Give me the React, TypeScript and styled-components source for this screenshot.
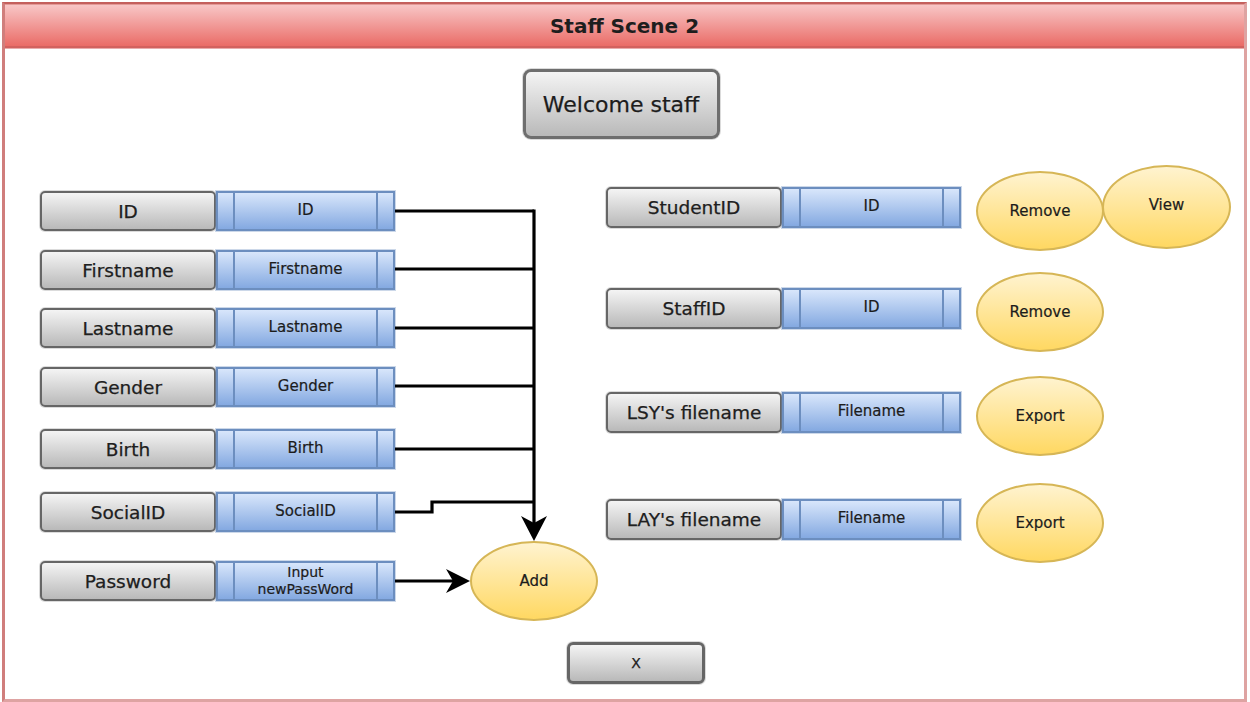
import React from 'react'
import styled, { createGlobalStyle } from 'styled-components'

const FONT = '"DejaVu Sans", Verdana, sans-serif'

const GlobalStyle = createGlobalStyle`
  html, body {
    margin: 0;
    padding: 0;
    background: #ffffff;
  }
  body {
    width: 1250px;
    height: 702px;
    overflow: hidden;
    font-family: ${FONT};
    color: #1c1c1c;
  }
`

interface RowSpec {
  label: string
  value: string
  gap: number
}

const leftRows: Array<RowSpec> = [
  { label: 'ID', value: 'ID', gap: 20 },
  { label: 'Firstname', value: 'Firstname', gap: 19 },
  { label: 'Lastname', value: 'Lastname', gap: 18 },
  { label: 'Gender', value: 'Gender', gap: 19 },
  { label: 'Birth', value: 'Birth', gap: 22 },
  { label: 'SocialID', value: 'SocialID', gap: 23 }
]

interface ActionRowSpec {
  label: string
  value: string
  gap: number
  actions: Array<string>
}

const rightRows: Array<ActionRowSpec> = [
  { label: 'StudentID', value: 'ID', gap: 0, actions: ['Remove', 'View'] },
  { label: 'StaffID', value: 'ID', gap: 21, actions: ['Remove'] },
  { label: "LSY's filename", value: 'Filename', gap: 24, actions: ['Export'] },
  { label: "LAY's filename", value: 'Filename', gap: 27, actions: ['Export'] }
]

const Field = ({ label, value, height, lift }: { label: string, value: React.ReactNode, height: number, lift?: boolean }): JSX.Element => (
  <FieldBox height={height} lift={lift}>
    <Label>{label}</Label>
    <Input>
      <Cap />
      <InputText>{value}</InputText>
      <Cap />
    </Input>
  </FieldBox>
)

// connectors between the left inputs and the Add bubble (coords local to LeftCol)
const Connectors = (): JSX.Element => (
  <Wires width="560" height="460" viewBox="0 0 560 460">
    <g stroke="#000" strokeWidth="3.2" fill="none">
      <path d="M355 40 H494" />
      <path d="M355 98 H494" />
      <path d="M355 157 H494" />
      <path d="M355 215 H494" />
      <path d="M355 278 H494" />
      <path d="M355 341 H392 V331 H494" />
      <path d="M494 38.4 V356" />
      <path d="M355 410 H418" />
    </g>
    <path d="M494 370 L481 345 L494 352 L507 345 Z" fill="#000" />
    <path d="M430 410 L406 398 L413 410 L406 422 Z" fill="#000" />
  </Wires>
)

const App = (): JSX.Element => {
  return (
    <>
      <GlobalStyle />
      <Window>
        <TitleBar>Staff Scene 2</TitleBar>
        <Body>
          <Welcome>Welcome staff</Welcome>
          <Main>
            <LeftCol>
              <Connectors />
              {leftRows.map(row =>
                <Row key={row.label} gap={row.gap}>
                  <Field label={row.label} value={row.value} height={40} />
                </Row>
              )}
              <Row gap={9}>
                <Field label="Password" height={40}
                  value={<TwoLine>Input<br />newPassWord</TwoLine>} />
                <Bubble offset={75}>Add</Bubble>
              </Row>
            </LeftCol>
            <RightCol>
              {rightRows.map(row =>
                <Row key={row.label} gap={row.gap}>
                  <Field label={row.label} value={row.value} height={41} lift />
                  {row.actions.map((action, i) =>
                    i === 0
                      ? <Bubble key={action} offset={15}>{action}</Bubble>
                      : <TallBubble key={action}>{action}</TallBubble>
                  )}
                </Row>
              )}
            </RightCol>
          </Main>
          <CloseButton>X</CloseButton>
        </Body>
      </Window>
    </>
  )
}

export default App

const Window = styled.div`
  box-sizing: border-box;
  margin: 2px 3px 0 2px;
  height: 700px;
  border: 3px solid #dea3a2;
  border-top: 2px solid #c4605d;
  border-left: 3px solid #d07e7c;
  display: flex;
  flex-direction: column;
`

const TitleBar = styled.div`
  box-sizing: border-box;
  height: 44px;
  flex: none;
  background: linear-gradient(#f8c6c6, #ea6c67);
  border-top: 1px solid #e39a98;
  border-bottom: 2px solid #d2625f;
  box-shadow: 0 1px 0 #e8acab;
  display: flex;
  align-items: center;
  justify-content: center;
  font-size: 20px;
  font-weight: bold;
  color: #1e1e1e;
`

const Body = styled.section`
  flex: 1;
  display: flex;
  flex-direction: column;
`

const grayFace = `
  background: linear-gradient(#f4f4f4, #b9b9b9);
  border: 2px solid #666666;
  box-shadow: 0 0 0 1px rgba(0, 0, 0, 0.14);
  -webkit-text-stroke: 0.25px #1c1c1c;
`

const Welcome = styled.div`
  ${grayFace}
  box-sizing: border-box;
  align-self: center;
  margin: 21px 7px 0 0;
  width: 197px;
  height: 70px;
  border-width: 3px;
  border-color: #6e6e6e;
  border-radius: 8px;
  display: flex;
  align-items: center;
  justify-content: center;
  font-size: 22px;
`

const Main = styled.div`
  display: grid;
  grid-template-columns: 566px 1fr;
  align-items: start;
  padding-left: 35px;
  margin-top: 32px;
`

const LeftCol = styled.div`
  position: relative;
  display: flex;
  flex-direction: column;
`

const RightCol = styled.div`
  display: flex;
  flex-direction: column;
`

const Wires = styled.svg`
  position: absolute;
  top: 0;
  left: 0;
  overflow: visible;
  pointer-events: none;
`

const Row = styled.div<{ gap: number }>`
  display: flex;
  align-items: center;
  margin-top: ${({ gap }) => gap}px;
`

const FieldBox = styled.div<{ height: number, lift?: boolean }>`
  display: flex;
  height: ${({ height }) => height}px;
  margin-bottom: ${({ lift }) => lift ? 8 : 0}px;
`

const Label = styled.div`
  ${grayFace}
  box-sizing: border-box;
  width: 176px;
  border-radius: 5px;
  display: flex;
  align-items: center;
  justify-content: center;
  font-size: 18.5px;
  color: #202020;
`

const Input = styled.div`
  box-sizing: border-box;
  width: 179px;
  display: flex;
  border: 2px solid #6c8ebf;
  box-shadow: 0 0 0 1px rgba(108, 142, 191, 0.35);
  background: linear-gradient(#d8e6fb, #84a9e1);
`

const Cap = styled.div`
  width: 15px;
  flex: none;
  border-left: 2px solid #6c8ebf;
  border-right: 2px solid #6c8ebf;
  &:first-child { border-left: none; }
  &:last-child { border-right: none; }
`

const InputText = styled.div`
  flex: 1;
  display: flex;
  align-items: center;
  justify-content: center;
  font-size: 15px;
  color: #1c1c1c;
  padding-bottom: 3px;
  -webkit-text-stroke: 0.2px #1c1c1c;
`

const TwoLine = styled.span`
  text-align: center;
  font-size: 14px;
  line-height: 17px;
  margin-top: 3px;
`

const Bubble = styled.div<{ offset: number }>`
  box-sizing: border-box;
  flex: none;
  width: 128px;
  height: 80px;
  margin-left: ${({ offset }) => offset}px;
  border-radius: 50%;
  border: 2px solid #d6b656;
  background: linear-gradient(#fff3cf, #ffd862);
  display: flex;
  align-items: center;
  justify-content: center;
  font-size: 15px;
  color: #1c1c1c;
  -webkit-text-stroke: 0.2px #1c1c1c;
`

const TallBubble = styled(Bubble).attrs({ offset: -2 })`
  width: 129px;
  height: 84px;
  margin-top: -8px;
  padding-bottom: 4px;
`

const CloseButton = styled.div`
  ${grayFace}
  box-sizing: border-box;
  width: 138px;
  height: 42px;
  margin: 21px 0 0 562px;
  border-width: 3px;
  border-radius: 6px;
  display: flex;
  align-items: center;
  justify-content: center;
  font-size: 14px;
  color: #222;
`
